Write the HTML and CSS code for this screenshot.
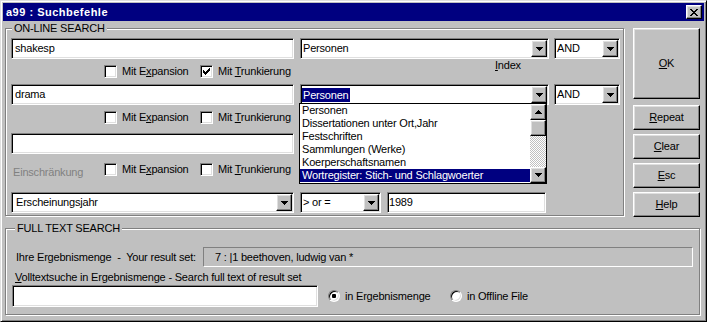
FILE: index.html
```html
<!DOCTYPE html>
<html lang="de">
<head>
<meta charset="utf-8">
<title>a99 : Suchbefehle</title>
<link rel="stylesheet" href="styles.css">
</head>
<body>
<div class="window">
  <div class="titlebar">
    <span class="title">a99 : Suchbefehle</span>
    <span class="close raised">
      <svg width="8" height="7" viewBox="0 0 8 7"><path d="M0 0h2v1H0zM6 0h2v1H6zM1 1h2v1H1zM5 1h2v1H5zM2 2h4v1H2zM3 3h2v1H3zM2 4h4v1H2zM1 5h2v1H1zM5 5h2v1H5zM0 6h2v1H0zM6 6h2v1H6z"/></svg>
    </span>
  </div>

  <div class="top">
    <fieldset class="group online">
      <legend>ON-LINE SEARCH</legend>

      <div class="row">
        <div class="field text wide">shakesp</div>
        <div class="field combo mid"><span class="val">Personen</span><span class="drop raised"><svg width="7" height="4" viewBox="0 0 7 4"><path d="M0 0h7v1H0zM1 1h5v1H1zM2 2h3v1H2zM3 3h1v1H3z"/></svg></span></div>
        <div class="field combo op"><span class="val">AND</span><span class="drop raised"><svg width="7" height="4" viewBox="0 0 7 4"><path d="M0 0h7v1H0zM1 1h5v1H1zM2 2h3v1H2zM3 3h1v1H3z"/></svg></span></div>
      </div>

      <div class="checkrow cr1">
        <span class="lead"></span>
        <span class="check"><span class="box"></span><span>Mit E<u>x</u>pansion</span></span>
        <span class="check"><span class="box"><svg width="7" height="7" viewBox="0 0 7 7"><path d="M0 2h1v3H0zM1 3h1v3H1zM2 4h1v3H2zM3 3h1v3H3zM4 2h1v3H4zM5 1h1v3H5zM6 0h1v3H6z"/></svg></span><span>Mit <u>T</u>runkierung</span></span>
        <span class="index"><u>I</u>ndex</span>
      </div>

      <div class="row">
        <div class="field text wide">drama</div>
        <div class="field combo mid open">
          <span class="val"><span class="sel">Personen</span></span>
          <span class="drop raised"><svg width="7" height="4" viewBox="0 0 7 4"><path d="M0 0h7v1H0zM1 1h5v1H1zM2 2h3v1H2zM3 3h1v1H3z"/></svg></span>
          <div class="list">
            <ul class="items">
              <li>Personen</li>
              <li>Dissertationen unter Ort,Jahr</li>
              <li>Festschriften</li>
              <li>Sammlungen (Werke)</li>
              <li>Koerperschaftsnamen</li>
              <li class="hl">Wortregister: Stich- und Schlagwoerter</li>
            </ul>
            <div class="scrollbar">
              <span class="sb-btn raised"><svg width="7" height="4" viewBox="0 0 7 4"><path d="M3 0h1v1H3zM2 1h3v1H2zM1 2h5v1H1zM0 3h7v1H0z"/></svg></span>
              <span class="sb-btn raised"></span>
              <span class="track"></span>
              <span class="sb-btn raised"><svg width="7" height="4" viewBox="0 0 7 4"><path d="M0 0h7v1H0zM1 1h5v1H1zM2 2h3v1H2zM3 3h1v1H3z"/></svg></span>
            </div>
          </div>
        </div>
        <div class="field combo op"><span class="val">AND</span><span class="drop raised"><svg width="7" height="4" viewBox="0 0 7 4"><path d="M0 0h7v1H0zM1 1h5v1H1zM2 2h3v1H2zM3 3h1v1H3z"/></svg></span></div>
      </div>

      <div class="checkrow cr2">
        <span class="lead"></span>
        <span class="check"><span class="box"></span><span>Mit E<u>x</u>pansion</span></span>
        <span class="check"><span class="box"></span><span>Mit <u>T</u>runkierung</span></span>
      </div>

      <div class="row">
        <div class="field text wide"></div>
      </div>

      <div class="checkrow cr3">
        <span class="lead disabled">Einschränkung</span>
        <span class="check"><span class="box"></span><span>Mit E<u>x</u>pansion</span></span>
        <span class="check"><span class="box"></span><span>Mit <u>T</u>runkierung</span></span>
      </div>

      <div class="row">
        <div class="field combo wide year"><span class="val">Erscheinungsjahr</span><span class="drop raised"><svg width="7" height="4" viewBox="0 0 7 4"><path d="M0 0h7v1H0zM1 1h5v1H1zM2 2h3v1H2zM3 3h1v1H3z"/></svg></span></div>
        <div class="field combo cmp"><span class="val">&gt; or =</span><span class="drop raised"><svg width="7" height="4" viewBox="0 0 7 4"><path d="M0 0h7v1H0zM1 1h5v1H1zM2 2h3v1H2zM3 3h1v1H3z"/></svg></span></div>
        <div class="field text num">1989</div>
      </div>
    </fieldset>

    <div class="buttons">
      <div class="btn raised ok"><span><u>O</u>K</span></div>
      <div class="btn raised"><span><u>R</u>epeat</span></div>
      <div class="btn raised"><span><u>C</u>lear</span></div>
      <div class="btn raised"><span><u>E</u>sc</span></div>
      <div class="btn raised"><span><u>H</u>elp</span></div>
    </div>
  </div>

  <fieldset class="group fulltext">
    <legend>FULL TEXT SEARCH</legend>
    <div class="resultrow">
      <span class="rlabel">Ihre Ergebnismenge &nbsp;-&nbsp; Your result set:</span>
      <div class="result">7 : |1 beethoven, ludwig van *</div>
    </div>
    <div class="vlabel"><u>V</u>olltextsuche in Ergebnismenge - Search full text of result set</div>
    <div class="searchrow">
      <div class="field text ft"></div>
      <span class="opt first"><span class="radio on"></span><span>in Ergebnismenge</span></span>
      <span class="opt"><span class="radio"></span><span>in Offline File</span></span>
    </div>
  </fieldset>
</div>
</body>
</html>
```

FILE: styles.css
```css
* { box-sizing: border-box; }
html, body { margin: 0; padding: 0; }
body {
  background: #c0c0c0;
  font: 11px/13px "Liberation Sans", Arial, sans-serif;
  letter-spacing: -0.2px;
  color: #000;
}
u { text-decoration: underline; text-underline-offset: 1px; }

.raised {
  background: #c0c0c0;
  border: 1px solid;
  border-color: #fff #000 #000 #fff;
  box-shadow: inset -1px -1px 0 #808080, inset 1px 1px 0 #dfdfdf;
}

.window {
  width: 707px;
  height: 322px;
  border: 1px solid;
  border-color: #dfdfdf #000 #000 #dfdfdf;
  box-shadow: inset 1px 1px 0 #fff, inset -1px -1px 0 #808080;
  padding: 2px;
  background: #c0c0c0;
}

.titlebar {
  height: 18px;
  background: #000080;
  color: #fff;
  display: flex;
  align-items: center;
  justify-content: space-between;
  padding: 0 2px 0 3px;
}
.title { font-weight: bold; letter-spacing: 0.5px; line-height: 18px; }
.close {
  width: 16px;
  height: 14px;
  display: flex;
  align-items: center;
  justify-content: center;
  padding-right: 1px;
}
.close svg { display: block; fill: #000; }

.top {
  display: flex;
  align-items: flex-start;
  height: 195px;
  margin: 1px 0 0 2px;
}

.group {
  margin: 0;
  min-width: 0;
  border: 1px solid #808080;
  box-shadow: 1px 1px 0 #fff, inset 1px 1px 0 #fff;
}
.group legend {
  padding: 0 2px;
  line-height: 13px;
  background: #c0c0c0;
}
.online {
  width: 619px;
  height: 194px;
  padding: 3px 0 2px 5px;
}
.online legend { margin-left: 1px; }

.row { display: flex; height: 21px; }

.field {
  height: 21px;
  background: #fff;
  border: 1px solid;
  border-color: #808080 #fff #fff #808080;
  box-shadow: inset 1px 1px 0 #000, inset -1px -1px 0 #dfdfdf;
  padding: 1px;
  line-height: 17px;
  white-space: nowrap;
}
.text { padding-left: 3px; }
.wide { width: 283px; }
.mid { width: 249px; margin-left: 6px; }
.op { width: 66px; margin-left: 5px; }
.cmp { width: 81px; margin-left: 6px; }
.num { width: 159px; margin-left: 6px; padding-left: 1px; }

.combo { display: flex; }
.combo .val { flex: 1; padding-left: 1px; display: flex; align-items: center; overflow: hidden; }
.combo.year .val { padding-left: 3px; }
.drop {
  width: 16px;
  height: 17px;
  flex: none;
  display: flex;
  align-items: center;
  justify-content: center;
}
.drop svg, .sb-btn svg { display: block; fill: #000; }

.open { position: relative; }
.open .val { padding-left: 0; }
.sel { background: #000080; color: #fff; padding: 0 1px; line-height: 14px; }

.list {
  position: absolute;
  left: -2px;
  top: 18px;
  width: 248px;
  height: 81px;
  border: 1px solid #000;
  background: #fff;
  display: flex;
  z-index: 5;
}
.items {
  flex: 1;
  margin: 0;
  padding: 0;
  list-style: none;
  min-width: 0;
}
.items li {
  height: 13px;
  line-height: 13px;
  padding-left: 2px;
  white-space: nowrap;
}
.items li.hl { background: #000080; color: #fff; }
.scrollbar {
  width: 16px;
  display: flex;
  flex-direction: column;
}
.sb-btn {
  height: 16px;
  flex: none;
  display: flex;
  align-items: center;
  justify-content: center;
}
.track {
  flex: 1;
  background-image: conic-gradient(#fff 25%, #c0c0c0 0 50%, #fff 0 75%, #c0c0c0 0);
  background-size: 2px 2px;
}

.checkrow { display: flex; align-items: flex-start; }
.cr1 { height: 25px; }
.cr2 { height: 28px; }
.cr3 { height: 38px; }
.lead { width: 93px; flex: none; padding-left: 2px; }
.disabled { color: #808080; margin-top: 12px; }
.check {
  width: 96px;
  flex: none;
  display: flex;
  align-items: center;
  gap: 5px;
  white-space: nowrap;
  margin-top: 6px;
}
.cr3 .check { margin-top: 9px; }
.box {
  width: 13px;
  height: 13px;
  flex: none;
  background: #fff;
  border: 1px solid;
  border-color: #808080 #fff #fff #808080;
  box-shadow: inset 1px 1px 0 #000, inset -1px -1px 0 #dfdfdf;
  display: flex;
  align-items: center;
  justify-content: center;
}
.box svg { display: block; fill: #000; }
.index { margin-left: 199px; }

.buttons {
  width: 67px;
  display: flex;
  flex-direction: column;
  margin: 6px 0 0 9px;
}
.btn {
  height: 25px;
  margin-top: 4px;
  display: flex;
  align-items: center;
  justify-content: center;
}
.btn.ok { height: 71px; margin-top: 0; }
.btn.ok + .btn { margin-top: 6px; }

.fulltext {
  width: 695px;
  height: 93px;
  margin: 5px 0 0 2px;
  padding: 12px 6px 7px 6px;
}
.fulltext legend { margin-left: 3px; }

.resultrow { display: flex; align-items: center; height: 20px; }
.rlabel { width: 187px; flex: none; margin-left: 4px; white-space: nowrap; }
.result {
  width: 490px;
  flex: none;
  height: 20px;
  border: 1px solid;
  border-color: #808080 #fff #fff #808080;
  padding-left: 11px;
  line-height: 18px;
  white-space: nowrap;
}
.vlabel { margin: 4px 0 0 3px; line-height: 13px; white-space: nowrap; }
.searchrow { display: flex; align-items: center; height: 22px; margin-top: 1px; }
.ft { width: 306px; height: 22px; flex: none; }
.opt { display: flex; align-items: center; gap: 5px; white-space: nowrap; }
.opt.first { width: 122px; margin-left: 10px; }
.radio {
  width: 12px;
  height: 12px;
  flex: none;
  border-radius: 50%;
  border: 1px solid;
  border-color: #808080 #fff #fff #808080;
  box-shadow: inset 1px 1px 0 #000, inset -1px -1px 0 #dfdfdf;
  background: #fff;
}
.radio.on { background: radial-gradient(circle, #000 0 2px, #fff 2.5px); }
```
